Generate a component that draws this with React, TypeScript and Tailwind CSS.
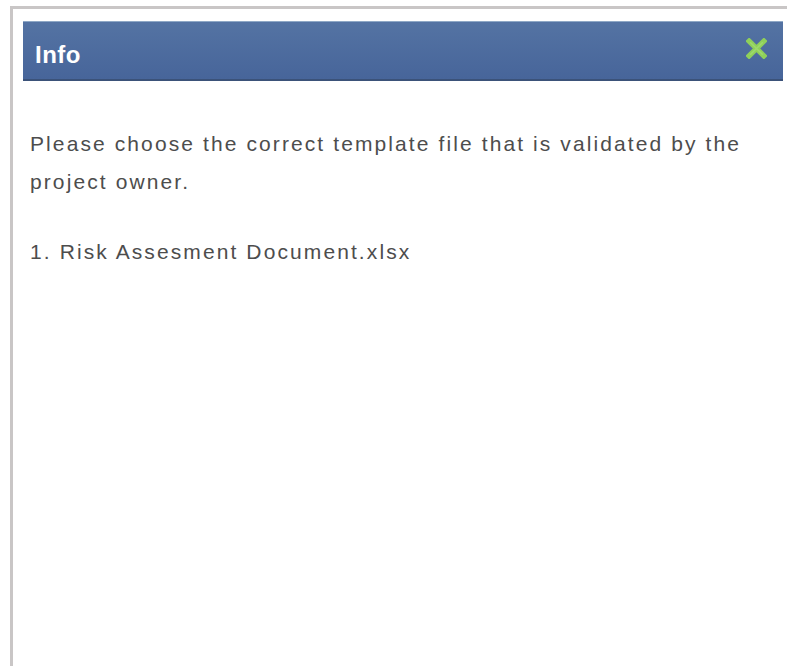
import React from "react";

function CloseIcon() {
  return (
    <svg width="21" height="21" viewBox="0 0 20 20" aria-hidden="true">
      <path
        d="M3 3 L17 17 M17 3 L3 17"
        stroke="#8fd05a"
        strokeWidth="5"
        strokeLinecap="square"
        fill="none"
      />
      <path
        d="M4 4 L16 16 M16 4 L4 16"
        stroke="#a8e07a"
        strokeWidth="1.5"
        fill="none"
        opacity="0.6"
      />
    </svg>
  );
}

export default function App() {
  return (
    <div
      className="min-h-screen bg-white pt-[6px] pl-[10px]"
      style={{ fontFamily: '"Liberation Sans", Arial, sans-serif' }}
    >
      <div className="h-[660px] border-t-[3px] border-l-[3px] border-[#c9c6c6] pt-[12px] pl-[10px] pr-[4px]">
        {/* title bar */}
        <div className="h-[60px] flex items-center justify-between pl-3 pr-4 pt-2 bg-gradient-to-b from-[#5473a3] to-[#47659a] border-t border-[#8fa8c6] border-b-2 border-b-[#3b5279]">
          <span className="text-white font-bold text-[24px] tracking-[0.5px]">
            Info
          </span>
          <span className="-mt-3">
            <CloseIcon />
          </span>
        </div>

        {/* message */}
        <div className="pl-[7px] pr-2 pt-[44px] text-[21px] leading-[38px] tracking-[2.1px] text-[#4d4d4d]">
          <p>
            Please choose the correct template file that is validated by the
            project owner.
          </p>
          <p className="mt-[32px]">1. Risk Assesment Document.xlsx</p>
        </div>
      </div>
    </div>
  );
}
